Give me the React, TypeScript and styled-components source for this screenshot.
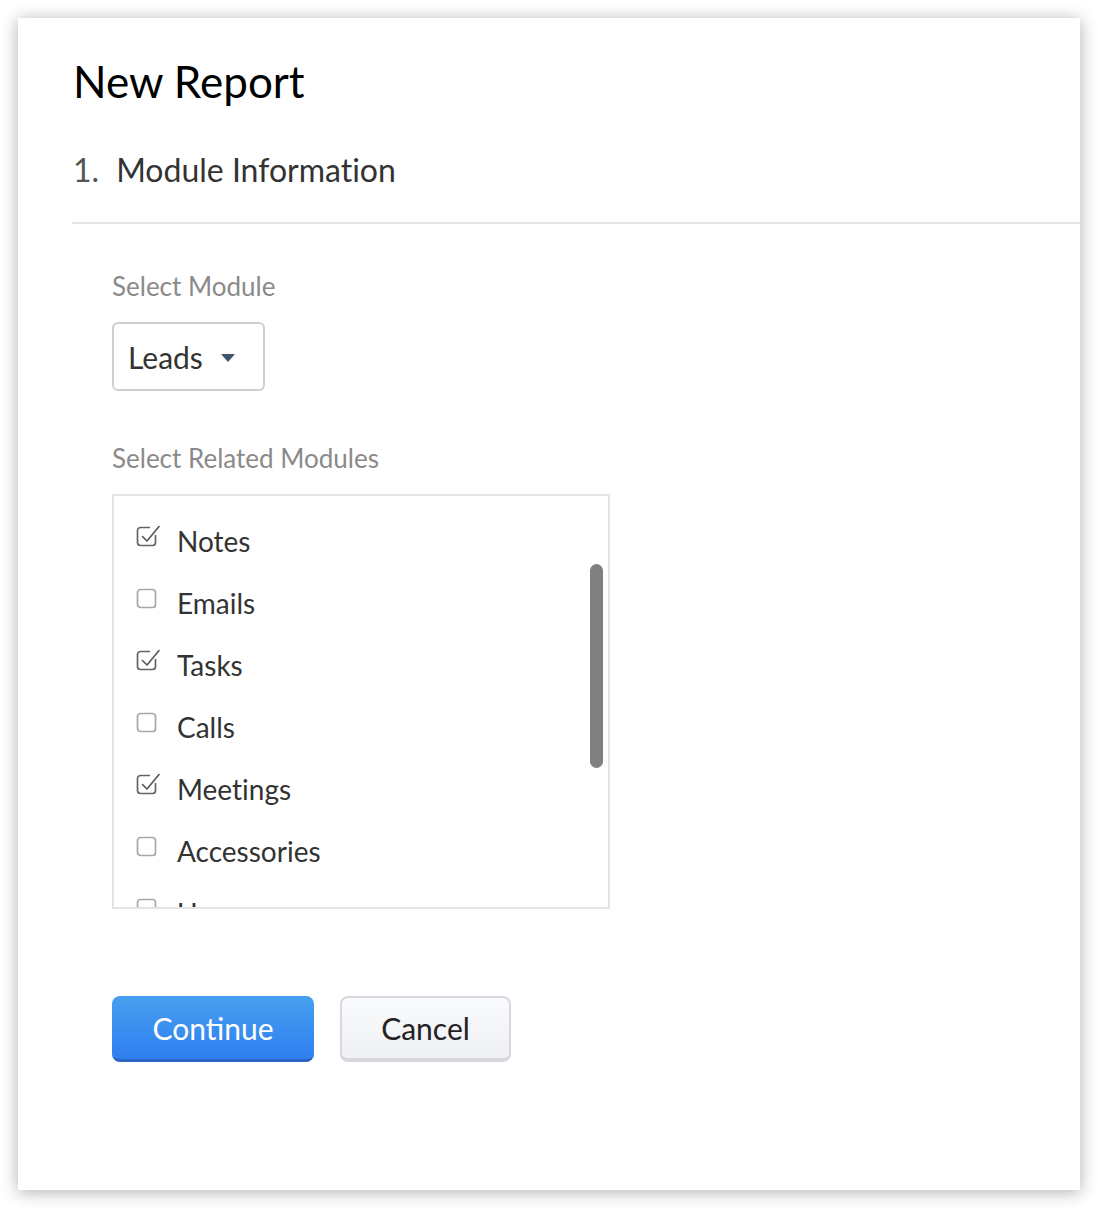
import React from "react"
import styled, { createGlobalStyle } from "styled-components"

const GlobalStyle = createGlobalStyle`
  html, body {
    margin: 0;
    padding: 0;
    background: #ffffff;
    font-family: Lato, "Open Sans", Arial, sans-serif;
    font-variant-ligatures: none;
  }
`

type ModuleItem = { name: string; checked: boolean }

const relatedModules: ModuleItem[] = [
  { name: "Notes", checked: true },
  { name: "Emails", checked: false },
  { name: "Tasks", checked: true },
  { name: "Calls", checked: false },
  { name: "Meetings", checked: true },
  { name: "Accessories", checked: false },
  { name: "Users", checked: false },
]

const CheckIcon = ({ checked }: { checked: boolean }) =>
  checked ? (
    <svg width="24" height="22" viewBox="0 0 24 22" fill="none">
      <path
        d="M14 2.5H4.5a3 3 0 0 0-3 3v12a3 3 0 0 0 3 3h12a3 3 0 0 0 3-3V10"
        stroke="#666"
        strokeWidth="1.7"
      />
      <path d="M6.5 11.5l4.5 4.5L23 1.5" stroke="#555" strokeWidth="1.6" strokeLinecap="round" strokeLinejoin="round" />
    </svg>
  ) : (
    <svg width="24" height="22" viewBox="0 0 24 22" fill="none">
      <rect x="1.5" y="2.5" width="18" height="18" rx="3" stroke="#a8a8a8" strokeWidth="1.7" />
    </svg>
  )

const App = () => {
  return (
    <>
      <GlobalStyle />
      <Card>
        <Title>New Report</Title>
        <StepTitle>
          <StepNumber>1.</StepNumber>
          Module Information
        </StepTitle>
        <Divider />
        <Form>
          <FieldLabel>Select Module</FieldLabel>
          <Dropdown>
            Leads
            <Caret />
          </Dropdown>
          <FieldLabel $top={52}>Select Related Modules</FieldLabel>
          <ListBox>
            {relatedModules.map((item) => (
              <ListRow key={item.name}>
                <CheckBox>
                  <CheckIcon checked={item.checked} />
                </CheckBox>
                {item.name}
              </ListRow>
            ))}
            <ScrollThumb />
          </ListBox>
          <Actions>
            <PrimaryButton>Continue</PrimaryButton>
            <SecondaryButton>Cancel</SecondaryButton>
          </Actions>
        </Form>
      </Card>
    </>
  )
}

export default App

const Card = styled.div`
  margin: 18px;
  width: 1062px;
  height: 1172px;
  box-sizing: border-box;
  background: #ffffff;
  box-shadow: 0 2px 16px rgba(0, 0, 0, 0.32);
  padding-top: 35px;
  padding-left: 54px;
`

const Title = styled.h1`
  margin: 0 0 0 1px;
  font-size: 44px;
  font-weight: 400;
  line-height: 56px;
  color: #000;
`

const StepTitle = styled.div`
  margin: 41px 0 0 1px;
  font-size: 32px;
  line-height: 40px;
  color: #333;
`

const StepNumber = styled.span`
  color: #555;
  margin-right: 17px;
`

const Divider = styled.div`
  margin-top: 32px;
  height: 2px;
  background: #e6e6e6;
`

const Form = styled.div`
  padding: 47px 0 0 40px;
  display: flex;
  flex-direction: column;
  align-items: flex-start;
`

const FieldLabel = styled.div<{ $top?: number }>`
  margin-top: ${(p) => p.$top ?? 0}px;
  font-size: 26px;
  line-height: 30px;
  color: #8a8a8a;
`

const Dropdown = styled.div`
  margin-top: 21px;
  width: 153px;
  height: 69px;
  box-sizing: border-box;
  border: 2px solid #cfcfcf;
  border-radius: 6px;
  display: flex;
  align-items: center;
  padding-left: 14px;
  font-size: 30px;
  color: #333;
`

const Caret = styled.span`
  margin-left: 18px;
  margin-top: 2px;
  width: 0;
  height: 0;
  border-left: 7px solid transparent;
  border-right: 7px solid transparent;
  border-top: 8px solid #3e556b;
  border-radius: 1px;
`

const ListBox = styled.div`
  position: relative;
  margin-top: 21px;
  width: 498px;
  height: 415px;
  box-sizing: border-box;
  border: 2px solid #e4e4e4;
  overflow: hidden;
  padding-top: 14px;
`

const ListRow = styled.div`
  height: 62px;
  display: flex;
  align-items: center;
  padding-left: 22px;
  font-size: 28px;
  color: #333;
`

const CheckBox = styled.span`
  display: flex;
  width: 24px;
  height: 22px;
  margin-top: -11px;
  margin-right: 17px;
`

const ScrollThumb = styled.div`
  position: absolute;
  right: 5px;
  top: 68px;
  width: 13px;
  height: 204px;
  border-radius: 7px;
  background: #808080;
`

const Actions = styled.div`
  margin-top: 87px;
  display: flex;
  gap: 26px;
`

const BaseButton = styled.button`
  height: 66px;
  box-sizing: border-box;
  border-radius: 8px;
  font-family: Lato, "Open Sans", Arial, sans-serif;
  font-size: 30px;
  cursor: pointer;
`

const PrimaryButton = styled(BaseButton)`
  width: 202px;
  color: #fff;
  border: none;
  border-bottom: 3px solid #2a63c4;
  background: linear-gradient(#47a0ef, #2f7ef1);
`

const SecondaryButton = styled(BaseButton)`
  width: 171px;
  color: #222;
  border: 2px solid #d6d7df;
  border-bottom-width: 4px;
  background: linear-gradient(#fafbfc, #eff0f4);
`
